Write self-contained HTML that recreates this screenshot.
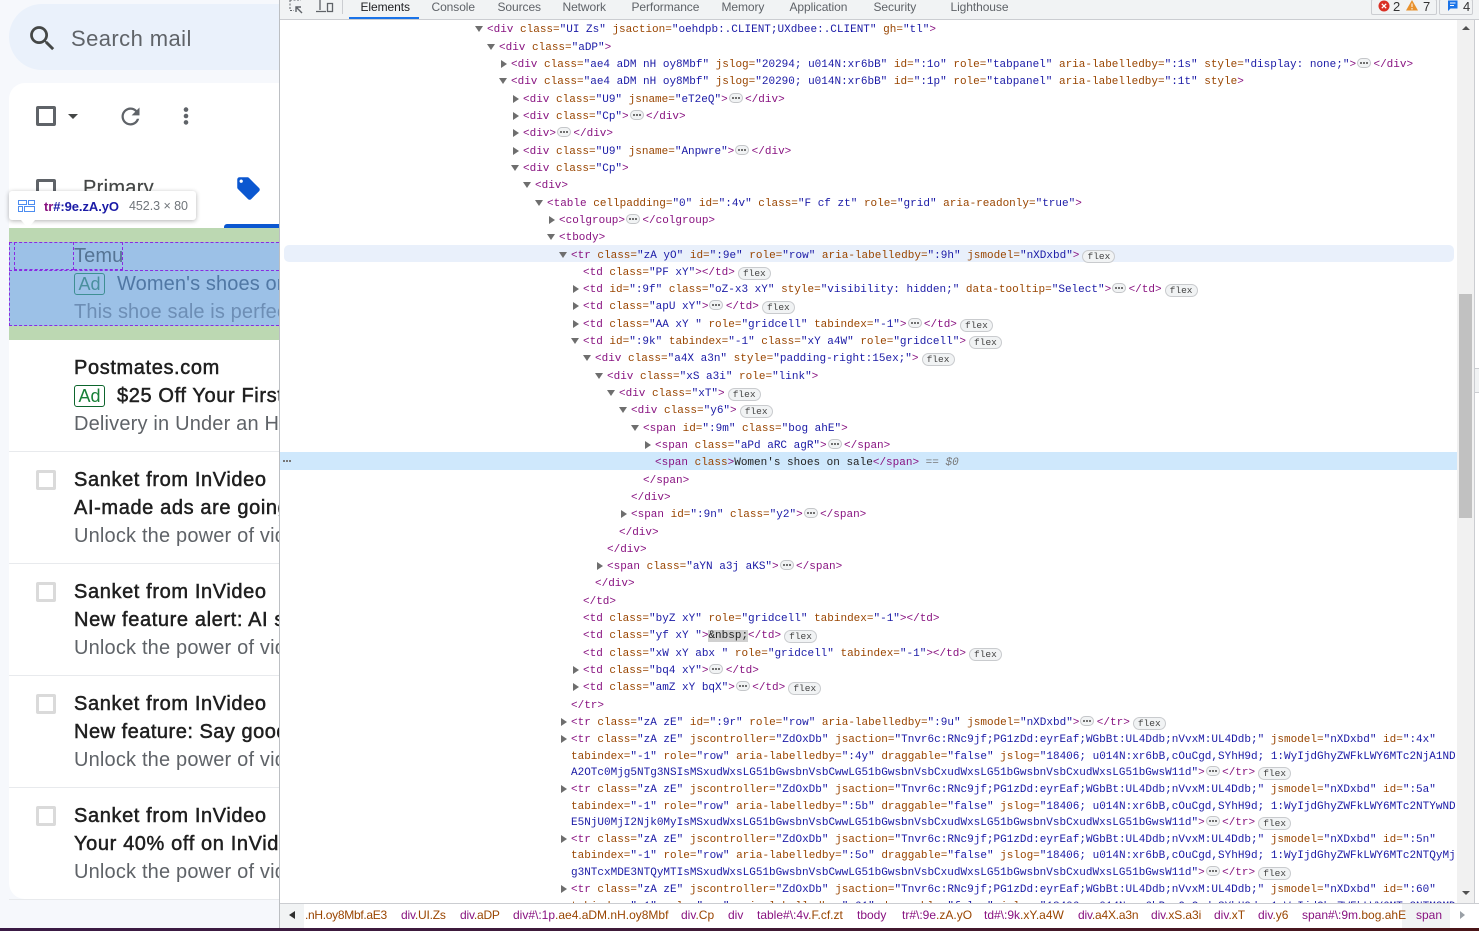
<!DOCTYPE html>
<html><head><meta charset="utf-8"><title>Gmail DevTools</title>
<style>
html,body{margin:0;padding:0;width:1479px;height:931px;overflow:hidden;background:#fff}
.abs,.gm,.gm *{position:absolute}
#left{position:absolute;left:0;top:0;width:279px;height:928px;background:#f6f8fc;overflow:hidden;font-family:"Liberation Sans",sans-serif}
.gt{position:absolute;left:74px;white-space:pre;font-size:20px;line-height:28px;height:28px;color:#1f1f1f}
.s{-webkit-text-stroke:.5px currentColor;font-weight:400;letter-spacing:.62px}
.u{color:#5f6368;letter-spacing:.18px}
.ad{position:absolute;left:74px;width:29px;height:20px;border:1px solid #0d652d;border-radius:3px;color:#188038;font-size:18px;line-height:21px;text-align:center;background:#fff}
.cb{position:absolute;left:36px;width:14px;height:14px;border:3px solid #dadada;border-radius:2px}
.sep{position:absolute;left:9px;width:270px;height:1px;background:#e8eaed}
#dt{position:absolute;left:279px;top:0;width:1200px;height:928px;background:#fff;border-left:1px solid #bcbfc3;overflow:hidden;box-sizing:border-box}
#bar{position:absolute;left:0;top:0;width:1200px;height:19px;background:#f1f3f4;border-bottom:1px solid #cbcdd1;font:12px "Liberation Sans",sans-serif;color:#5f6368}
#bar span{position:absolute;top:-1px;line-height:16px;letter-spacing:-.08px}
#code{position:absolute;left:-280px;top:0;width:1479px;height:903px;overflow:hidden;font:11px/17px "Liberation Mono",monospace;color:#881280}
#code p{position:absolute;margin:3px 0 0;white-space:pre;height:17px}
#code i{font-style:normal;color:#994500}
#code b{font-weight:400;color:#1a1aa6}
#code p.o:before{content:"";position:absolute;left:-12px;top:4px;border-style:solid;border-width:6px 4px 0 4px;border-color:#6e6e6e transparent transparent}
#code p.c:before{content:"";position:absolute;left:-10px;top:3px;border-style:solid;border-width:4px 0 4px 6px;border-color:transparent transparent transparent #6e6e6e}
#code u{display:inline-block;text-decoration:none;width:12px;height:8px;margin:0 2.4px 0 1px;vertical-align:-1px;border:1px solid #c4c6c9;border-radius:5px;background:#f1f3f4;position:relative}
#code u:after{content:"";position:absolute;left:2px;top:3px;width:2px;height:2px;background:#707070;box-shadow:3px 0 #707070,6px 0 #707070}
#code em{display:inline-block;font:9.5px/11px "Liberation Mono",monospace;font-style:normal;width:31px;height:11px;text-align:center;margin-left:3px;vertical-align:-1px;border:1px solid #c9cbce;border-radius:7px;background:#f1f3f4;color:#444}
#crumb{position:absolute;left:-280px;top:903px;width:1479px;height:25px;border-top:1px solid #cbcdd1;box-sizing:border-box;background:#fff;font:12px/23px "Liberation Sans",sans-serif;overflow:hidden}
#crumb span{position:absolute;top:0;white-space:pre;color:#881280}
#crumb i{font-style:normal;color:#994500}
</style></head><body>

<div id="left">
 <div class="abs" style="left:9px;top:4px;width:320px;height:66px;border-radius:33px;background:#eaf1fb"></div>
 <svg class="abs" style="left:26px;top:22px" width="33" height="33" viewBox="0 0 24 24"><path fill="#444746" d="M15.5 14h-.79l-.28-.27A6.471 6.471 0 0 0 16 9.5 6.5 6.5 0 1 0 9.5 16c1.61 0 3.09-.59 4.23-1.57l.27.28v.79l5 4.99L20.49 19l-4.99-5zm-6 0C7.01 14 5 11.99 5 9.5S7.01 5 9.5 5 14 7.01 14 9.5 11.99 14 9.5 14z"/></svg>
 <div class="abs" style="left:71px;top:25px;font-size:22px;line-height:28px;color:#5f6368;white-space:pre;letter-spacing:.42px">Search mail</div>
 <div class="abs" style="left:9px;top:83px;width:330px;height:816px;border-radius:16px;background:#fff"></div>

 <div class="abs" style="left:36px;top:106px;width:14px;height:14px;border:3px solid #5f6368;border-radius:2px"></div>
 <div class="abs" style="left:68px;top:114px;border-style:solid;border-width:5px 5.5px 0;border-color:#444746 transparent transparent"></div>
 <svg class="abs" style="left:116.5px;top:102.5px" width="27" height="27" viewBox="0 0 24 24"><path fill="#5f6368" d="M17.65 6.35A7.958 7.958 0 0 0 12 4c-4.42 0-7.99 3.58-7.99 8s3.57 8 7.99 8c3.73 0 6.84-2.55 7.73-6h-2.08A5.99 5.99 0 0 1 12 18c-3.31 0-6-2.69-6-6s2.69-6 6-6c1.66 0 3.14.69 4.22 1.78L13 11h7V4l-2.35 2.35z"/></svg>
 <svg class="abs" style="left:180px;top:106px" width="12" height="20"><circle cx="6" cy="3.6" r="2.3" fill="#5f6368"/><circle cx="6" cy="10" r="2.3" fill="#5f6368"/><circle cx="6" cy="16.4" r="2.3" fill="#5f6368"/></svg>

 <div class="abs" style="left:36px;top:179px;width:14px;height:14px;border:3px solid #5f6368;border-radius:2px"></div>
 <div class="abs" style="left:83px;top:174px;font-size:20px;line-height:28px;color:#444746;letter-spacing:.3px;-webkit-text-stroke:.2px currentColor">Primary</div>
 <svg class="abs" style="left:235px;top:175px" width="27" height="27" viewBox="0 0 24 24"><path fill="#0b57d0" d="M21.41 11.58l-9-9C12.05 2.22 11.55 2 11 2H4c-1.1 0-2 .9-2 2v7c0 .55.22 1.05.59 1.42l9 9c.36.36.86.58 1.41.58.55 0 1.05-.22 1.41-.59l7-7c.37-.36.59-.86.59-1.41 0-.55-.23-1.06-.59-1.42zM5.5 7C4.67 7 4 6.33 4 5.5S4.67 4 5.5 4 7 4.67 7 5.5 6.33 7 5.5 7z"/></svg>
 <div class="abs" style="left:224px;top:224px;width:70px;height:4px;background:#0b57d0;border-radius:3px 3px 0 0"></div>

 <div class="abs" style="left:9px;top:228px;width:270px;height:112px;background:#bcd8b2"></div>
 <div class="abs" style="left:9px;top:242px;width:270px;height:84px;background:#9cc1e7"></div>
 <div class="abs" style="left:9px;top:242px;width:270px;height:84px;box-sizing:border-box;border:1px dashed #8a2be2;border-right:0"></div>
 <div class="abs" style="left:14px;top:242px;width:60px;height:28px;box-sizing:border-box;border:1px dashed #8a2be2;border-top:0"></div>
 <div class="abs" style="left:74px;top:242px;width:49px;height:28px;box-sizing:border-box;border:1px dashed #8a2be2;border-top:0;border-left:0"></div>
 <div class="abs" style="left:9px;top:270px;width:270px;height:1px;border-top:1px dashed #8a2be2"></div>
 <div class="gt" style="top:242px;color:#557494;letter-spacing:.1px">Temu</div>
 <div class="ad" style="top:273px;background:transparent;border-color:#3f8f93;color:#4a8f9d">Ad</div>
 <div class="gt" style="left:117px;top:270px;color:#5077a4;letter-spacing:.12px">Women's shoes on sale</div>
 <div class="gt" style="top:298px;color:#6d8eb5;letter-spacing:.12px">This shoe sale is perfect</div>

 <div class="gt s" style="top:354px">Postmates.com</div>
 <div class="ad" style="top:385px">Ad</div>
 <div class="gt s" style="left:117px;top:382px">$25 Off Your First Order</div>
 <div class="gt u" style="top:410px">Delivery in Under an Hour</div>
 <div class="sep" style="top:451px"></div>

 <div class="cb" style="top:470px"></div>
 <div class="gt s" style="top:466px">Sanket from InVideo</div>
 <div class="gt s" style="top:494px">AI-made ads are going viral</div>
 <div class="gt u" style="top:522px">Unlock the power of video</div>
 <div class="sep" style="top:563px"></div>

 <div class="cb" style="top:582px"></div>
 <div class="gt s" style="top:578px">Sanket from InVideo</div>
 <div class="gt s" style="top:606px">New feature alert: AI script</div>
 <div class="gt u" style="top:634px">Unlock the power of video</div>
 <div class="sep" style="top:675px"></div>

 <div class="cb" style="top:694px"></div>
 <div class="gt s" style="top:690px">Sanket from InVideo</div>
 <div class="gt s" style="top:718px;letter-spacing:.5px">New feature: Say goodbye</div>
 <div class="gt u" style="top:746px">Unlock the power of video</div>
 <div class="sep" style="top:787px"></div>

 <div class="cb" style="top:806px"></div>
 <div class="gt s" style="top:802px">Sanket from InVideo</div>
 <div class="gt s" style="top:830px">Your 40% off on InVideo</div>
 <div class="gt u" style="top:858px">Unlock the power of video</div>
 <div class="sep" style="top:899px"></div>

 <div class="abs" style="left:9px;top:191px;width:187px;height:29px;background:#fff;border-radius:3px;box-shadow:0 1px 5px rgba(0,0,0,.3)"></div>
 <div class="abs" style="left:21px;top:220px;border-style:solid;border-width:8px 7px 0;border-color:#fff transparent transparent"></div>
 <svg class="abs" style="left:18px;top:200px" width="17" height="12"><g fill="none" stroke="#4d8df0" stroke-width="1"><rect x=".5" y=".5" width="8" height="4"/><rect x="10.5" y=".5" width="6" height="4"/><rect x=".5" y="6.5" width="4" height="5"/><rect x="6.5" y="6.5" width="10" height="5"/></g></svg>
 <div class="abs" style="left:44px;top:198px;font-size:13px;line-height:17px;font-weight:700;white-space:pre;letter-spacing:-.08px"><span style="color:#881280">tr</span><span style="color:#1a1aa6">#:9e.zA.yO</span></div>
 <div class="abs" style="left:129px;top:198px;font-size:12.5px;line-height:17px;color:#70757a;white-space:pre;letter-spacing:-.05px">452.3 × 80</div>
</div>

<div id="dt">
 <div id="code">
<div class="abs" style="left:284px;top:245px;width:1170px;height:17px;background:#e9f0fb;border-radius:5px"></div>
<div class="abs" style="left:280px;top:452px;width:1177px;height:18px;background:#cfe8fc"></div>
<div class="abs" style="left:283px;top:460px;width:2px;height:2px;background:#777;box-shadow:3px 0 #777,6px 0 #777"></div>

<p class="o" style="left:487px;top:19px">&lt;div <i>class=</i><b>"UI Zs"</b> <i>jsaction=</i><b>"oehdpb:.CLIENT;UXdbee:.CLIENT"</b> <i>gh=</i><b>"tl"</b>&gt;</p>
<p class="o" style="left:499px;top:37px">&lt;div <i>class=</i><b>"aDP"</b>&gt;</p>
<p class="c" style="left:511px;top:54px">&lt;div <i>class=</i><b>"ae4 aDM nH oy8Mbf"</b> <i>jslog=</i><b>"20294; u014N:xr6bB"</b> <i>id=</i><b>":1o"</b> <i>role=</i><b>"tabpanel"</b> <i>aria-labelledby=</i><b>":1s"</b> <i>style=</i><b>"display: none;"</b>&gt;<u></u>&lt;/div&gt;</p>
<p class="o" style="left:511px;top:71px">&lt;div <i>class=</i><b>"ae4 aDM nH oy8Mbf"</b> <i>jslog=</i><b>"20290; u014N:xr6bB"</b> <i>id=</i><b>":1p"</b> <i>role=</i><b>"tabpanel"</b> <i>aria-labelledby=</i><b>":1t"</b> <i>style</i>&gt;</p>
<p class="c" style="left:523px;top:89px">&lt;div <i>class=</i><b>"U9"</b> <i>jsname=</i><b>"eT2eQ"</b>&gt;<u></u>&lt;/div&gt;</p>
<p class="c" style="left:523px;top:106px">&lt;div <i>class=</i><b>"Cp"</b>&gt;<u></u>&lt;/div&gt;</p>
<p class="c" style="left:523px;top:123px">&lt;div&gt;<u></u>&lt;/div&gt;</p>
<p class="c" style="left:523px;top:141px">&lt;div <i>class=</i><b>"U9"</b> <i>jsname=</i><b>"Anpwre"</b>&gt;<u></u>&lt;/div&gt;</p>
<p class="o" style="left:523px;top:158px">&lt;div <i>class=</i><b>"Cp"</b>&gt;</p>
<p class="o" style="left:535px;top:175px">&lt;div&gt;</p>
<p class="o" style="left:547px;top:193px">&lt;table <i>cellpadding=</i><b>"0"</b> <i>id=</i><b>":4v"</b> <i>class=</i><b>"F cf zt"</b> <i>role=</i><b>"grid"</b> <i>aria-readonly=</i><b>"true"</b>&gt;</p>
<p class="c" style="left:559px;top:210px">&lt;colgroup&gt;<u></u>&lt;/colgroup&gt;</p>
<p class="o" style="left:559px;top:227px">&lt;tbody&gt;</p>
<p class="o" style="left:571px;top:245px">&lt;tr <i>class=</i><b>"zA yO"</b> <i>id=</i><b>":9e"</b> <i>role=</i><b>"row"</b> <i>aria-labelledby=</i><b>":9h"</b> <i>jsmodel=</i><b>"nXDxbd"</b>&gt;<em>flex</em></p>
<p style="left:583px;top:262px">&lt;td <i>class=</i><b>"PF xY"</b>&gt;&lt;/td&gt;<em>flex</em></p>
<p class="c" style="left:583px;top:279px">&lt;td <i>id=</i><b>":9f"</b> <i>class=</i><b>"oZ-x3 xY"</b> <i>style=</i><b>"visibility: hidden;"</b> <i>data-tooltip=</i><b>"Select"</b>&gt;<u></u>&lt;/td&gt;<em>flex</em></p>
<p class="c" style="left:583px;top:296px">&lt;td <i>class=</i><b>"apU xY"</b>&gt;<u></u>&lt;/td&gt;<em>flex</em></p>
<p class="c" style="left:583px;top:314px">&lt;td <i>class=</i><b>"AA xY "</b> <i>role=</i><b>"gridcell"</b> <i>tabindex=</i><b>"-1"</b>&gt;<u></u>&lt;/td&gt;<em>flex</em></p>
<p class="o" style="left:583px;top:331px">&lt;td <i>id=</i><b>":9k"</b> <i>tabindex=</i><b>"-1"</b> <i>class=</i><b>"xY a4W"</b> <i>role=</i><b>"gridcell"</b>&gt;<em>flex</em></p>
<p class="o" style="left:595px;top:348px">&lt;div <i>class=</i><b>"a4X a3n"</b> <i>style=</i><b>"padding-right:15ex;"</b>&gt;<em>flex</em></p>
<p class="o" style="left:607px;top:366px">&lt;div <i>class=</i><b>"xS a3i"</b> <i>role=</i><b>"link"</b>&gt;</p>
<p class="o" style="left:619px;top:383px">&lt;div <i>class=</i><b>"xT"</b>&gt;<em>flex</em></p>
<p class="o" style="left:631px;top:400px">&lt;div <i>class=</i><b>"y6"</b>&gt;<em>flex</em></p>
<p class="o" style="left:643px;top:418px">&lt;span <i>id=</i><b>":9m"</b> <i>class=</i><b>"bog ahE"</b>&gt;</p>
<p class="c" style="left:655px;top:435px">&lt;span <i>class=</i><b>"aPd aRC agR"</b>&gt;<u></u>&lt;/span&gt;</p>
<p style="left:655px;top:452px">&lt;span <i>class</i>&gt;<span style="color:#222">Women's shoes on sale</span>&lt;/span&gt; <span style="color:#777">== <span style="font-style:italic">$0</span></span></p>
<p style="left:643px;top:470px">&lt;/span&gt;</p>
<p style="left:631px;top:487px">&lt;/div&gt;</p>
<p class="c" style="left:631px;top:504px">&lt;span <i>id=</i><b>":9n"</b> <i>class=</i><b>"y2"</b>&gt;<u></u>&lt;/span&gt;</p>
<p style="left:619px;top:522px">&lt;/div&gt;</p>
<p style="left:607px;top:539px">&lt;/div&gt;</p>
<p class="c" style="left:607px;top:556px">&lt;span <i>class=</i><b>"aYN a3j aKS"</b>&gt;<u></u>&lt;/span&gt;</p>
<p style="left:595px;top:573px">&lt;/div&gt;</p>
<p style="left:583px;top:591px">&lt;/td&gt;</p>
<p style="left:583px;top:608px">&lt;td <i>class=</i><b>"byZ xY"</b> <i>role=</i><b>"gridcell"</b> <i>tabindex=</i><b>"-1"</b>&gt;&lt;/td&gt;</p>
<p style="left:583px;top:625px">&lt;td <i>class=</i><b>"yf xY "</b>&gt;<span style="background:#d0d0d0;color:#222">&amp;nbsp;</span>&lt;/td&gt;<em>flex</em></p>
<p style="left:583px;top:643px">&lt;td <i>class=</i><b>"xW xY abx "</b> <i>role=</i><b>"gridcell"</b> <i>tabindex=</i><b>"-1"</b>&gt;&lt;/td&gt;<em>flex</em></p>
<p class="c" style="left:583px;top:660px">&lt;td <i>class=</i><b>"bq4 xY"</b>&gt;<u></u>&lt;/td&gt;</p>
<p class="c" style="left:583px;top:677px">&lt;td <i>class=</i><b>"amZ xY bqX"</b>&gt;<u></u>&lt;/td&gt;<em>flex</em></p>
<p style="left:571px;top:695px">&lt;/tr&gt;</p>
<p class="c" style="left:571px;top:712px">&lt;tr <i>class=</i><b>"zA zE"</b> <i>id=</i><b>":9r"</b> <i>role=</i><b>"row"</b> <i>aria-labelledby=</i><b>":9u"</b> <i>jsmodel=</i><b>"nXDxbd"</b>&gt;<u></u>&lt;/tr&gt;<em>flex</em></p>

<p class="c" style="left:571px;top:729px">&lt;tr <i>class=</i><b>"zA zE"</b> <i>jscontroller=</i><b>"ZdOxDb"</b> <i>jsaction=</i><b>"Tnvr6c:RNc9jf;PG1zDd:eyrEaf;WGbBt:UL4Ddb;nVvxM:UL4Ddb;"</b> <i>jsmodel=</i><b>"nXDxbd"</b> <i>id=</i><b>":4x"</b></p>
<p style="left:571px;top:746px"><i>tabindex=</i><b>"-1"</b> <i>role=</i><b>"row"</b> <i>aria-labelledby=</i><b>":4y"</b> <i>draggable=</i><b>"false"</b> <i>jslog=</i><b>"18406; u014N:xr6bB,cOuCgd,SYhH9d; 1:WyIjdGhyZWFkLWY6MTc2NjA1ND</b></p>
<p style="left:571px;top:762px"><b>A2OTc0Mjg5NTg3NSIsMSxudWxsLG51bGwsbnVsbCwwLG51bGwsbnVsbCxudWxsLG51bGwsbnVsbCxudWxsLG51bGwsW11d"</b>&gt;<u></u>&lt;/tr&gt;<em>flex</em></p>

<p class="c" style="left:571px;top:779px">&lt;tr <i>class=</i><b>"zA zE"</b> <i>jscontroller=</i><b>"ZdOxDb"</b> <i>jsaction=</i><b>"Tnvr6c:RNc9jf;PG1zDd:eyrEaf;WGbBt:UL4Ddb;nVvxM:UL4Ddb;"</b> <i>jsmodel=</i><b>"nXDxbd"</b> <i>id=</i><b>":5a"</b></p>
<p style="left:571px;top:796px"><i>tabindex=</i><b>"-1"</b> <i>role=</i><b>"row"</b> <i>aria-labelledby=</i><b>":5b"</b> <i>draggable=</i><b>"false"</b> <i>jslog=</i><b>"18406; u014N:xr6bB,cOuCgd,SYhH9d; 1:WyIjdGhyZWFkLWY6MTc2NTYwND</b></p>
<p style="left:571px;top:812px"><b>E5NjU0MjI2Njk0MyIsMSxudWxsLG51bGwsbnVsbCwwLG51bGwsbnVsbCxudWxsLG51bGwsbnVsbCxudWxsLG51bGwsW11d"</b>&gt;<u></u>&lt;/tr&gt;<em>flex</em></p>

<p class="c" style="left:571px;top:829px">&lt;tr <i>class=</i><b>"zA zE"</b> <i>jscontroller=</i><b>"ZdOxDb"</b> <i>jsaction=</i><b>"Tnvr6c:RNc9jf;PG1zDd:eyrEaf;WGbBt:UL4Ddb;nVvxM:UL4Ddb;"</b> <i>jsmodel=</i><b>"nXDxbd"</b> <i>id=</i><b>":5n"</b></p>
<p style="left:571px;top:845px"><i>tabindex=</i><b>"-1"</b> <i>role=</i><b>"row"</b> <i>aria-labelledby=</i><b>":5o"</b> <i>draggable=</i><b>"false"</b> <i>jslog=</i><b>"18406; u014N:xr6bB,cOuCgd,SYhH9d; 1:WyIjdGhyZWFkLWY6MTc2NTQyMj</b></p>
<p style="left:571px;top:862px"><b>g3NTcxMDE3NTQyMTIsMSxudWxsLG51bGwsbnVsbCwwLG51bGwsbnVsbCxudWxsLG51bGwsbnVsbCxudWxsLG51bGwsW11d"</b>&gt;<u></u>&lt;/tr&gt;<em>flex</em></p>

<p class="c" style="left:571px;top:879px">&lt;tr <i>class=</i><b>"zA zE"</b> <i>jscontroller=</i><b>"ZdOxDb"</b> <i>jsaction=</i><b>"Tnvr6c:RNc9jf;PG1zDd:eyrEaf;WGbBt:UL4Ddb;nVvxM:UL4Ddb;"</b> <i>jsmodel=</i><b>"nXDxbd"</b> <i>id=</i><b>":60"</b></p>
<p style="left:571px;top:896px"><i>tabindex=</i><b>"-1"</b> <i>role=</i><b>"row"</b> <i>aria-labelledby=</i><b>":61"</b> <i>draggable=</i><b>"false"</b> <i>jslog=</i><b>"18406; u014N:xr6bB,cOuCgd,SYhH9d; 1:WyIjdGhyZWFkLWY6MTc2NTM2MD</b></p>

<div class="abs" style="left:1457px;top:20px;width:17px;height:883px;background:#f1f1f1"></div>
<div class="abs" style="left:1459px;top:294px;width:13px;height:224px;background:#c1c1c1"></div>
<div class="abs" style="left:1462px;top:26px;border-style:solid;border-width:0 4px 4px;border-color:transparent transparent #505050"></div>
<div class="abs" style="left:1462px;top:891px;border-style:solid;border-width:4px 4px 0;border-color:#505050 transparent transparent"></div>
<div class="abs" style="left:1474px;top:20px;width:1px;height:883px;background:#cbcdd1"></div>
<div class="abs" style="left:1475px;top:368px;width:4px;height:25px;background:#f1f3f4;border-top:1px solid #cbcdd1;border-bottom:1px solid #cbcdd1;box-sizing:border-box"></div>
 </div>

 <div id="bar">
  <svg class="abs" style="left:9px;top:0" width="48" height="14"><g fill="none" stroke="#5f6368"><path stroke-dasharray="2 1.5" d="M1 0v10.5H5M1 0H12"/><path stroke-width="1.4" d="M13 13L7 7M7 12V7h5"/><path d="M31 0v10M27 11.5h10M38.500 3.500h5v8h-5z" stroke-width="1.300"/></g></svg>
  <div class="abs" style="left:62px;top:0;width:1px;height:14px;background:#cbcdd1"></div>
  <div class="abs" style="left:69px;top:17px;width:70px;height:2px;background:#1a73e8"></div>
  <span style="left:80.500px;color:#202124">Elements</span>
  <span style="left:151.500px">Console</span>
  <span style="left:217.500px">Sources</span>
  <span style="left:282.500px">Network</span>
  <span style="left:351.500px">Performance</span>
  <span style="left:441.500px">Memory</span>
  <span style="left:509.500px">Application</span>
  <span style="left:593.500px">Security</span>
  <span style="left:670.500px">Lighthouse</span>
  <div class="abs" style="left:1091px;top:-1px;width:66px;height:16px;border:1px solid #cbcdd1;box-sizing:border-box;border-radius:2px"></div>
  <div class="abs" style="left:1159px;top:-1px;width:34px;height:16px;border:1px solid #cbcdd1;box-sizing:border-box;border-radius:2px"></div>
  <svg class="abs" style="left:1098px;top:0" width="70" height="14"><circle cx="6" cy="6" r="5.500" fill="#d93025"/><path d="M3.800 3.800l4.400 4.400M8.200 3.800l-4.400 4.400" stroke="#fff" stroke-width="1.300"/><path d="M28 10.500L34 0l6 10.500z" fill="#e8912d"/><path d="M34 3.500v3.500M34 8v1.500" stroke="#fff"/></svg>
  <svg class="abs" style="left:1167px;top:0" width="12" height="13"><path d="M1 .5h9.500v8H3.500L1 11z" fill="#1a73e8"/><path d="M3 3h5.500M3 5.500h4" stroke="#fff"/></svg>
  <span style="left:1113px;font-size:13px;color:#333">2</span>
  <span style="left:1143px;font-size:13px;color:#333">7</span>
  <span style="left:1183px;font-size:13px;color:#333">4</span>
 </div>

 <div id="crumb">
  <div class="abs" style="left:280px;top:0;width:24px;height:24px;background:#f1f3f4"></div>
  <div class="abs" style="left:289px;top:7px;border-style:solid;border-width:4px 6px 4px 0;border-color:transparent #303030 transparent transparent"></div>
  <div class="abs" style="left:1402px;top:0;width:48px;height:24px;background:#f1f3f4"></div>
  <div class="abs" style="left:1460px;top:7px;border-style:solid;border-width:4px 0 4px 5px;border-color:transparent transparent transparent #9aa0a6"></div>
  <span style="left:305px;letter-spacing:-.3px"><i>.nH.oy8Mbf.aE3</i></span>
  <span style="left:401px;letter-spacing:-.2px">div<i>.UI.Zs</i></span>
  <span style="left:460px;letter-spacing:-.2px">div<i>.aDP</i></span>
  <span style="left:513px">div#\:1p<i>.ae4.aDM.nH.oy8Mbf</i></span>
  <span style="left:681px">div<i>.Cp</i></span>
  <span style="left:728px">div</span>
  <span style="left:757px">table#\:4v<i>.F.cf.zt</i></span>
  <span style="left:857px">tbody</span>
  <span style="left:902px">tr#\:9e<i>.zA.yO</i></span>
  <span style="left:984px">td#\:9k<i>.xY.a4W</i></span>
  <span style="left:1078px;letter-spacing:-.2px">div<i>.a4X.a3n</i></span>
  <span style="left:1151px;letter-spacing:-.1px">div<i>.xS.a3i</i></span>
  <span style="left:1214px">div<i>.xT</i></span>
  <span style="left:1258px">div<i>.y6</i></span>
  <span style="left:1302px">span#\:9m<i>.bog.ahE</i></span>
  <span style="left:1416px">span</span>
 </div>
</div>
<div class="abs" style="left:0;top:928px;width:1479px;height:3px;background:linear-gradient(90deg,#3a1a45,#3f1a38 45%,#4a1518)"></div>
</body></html>
